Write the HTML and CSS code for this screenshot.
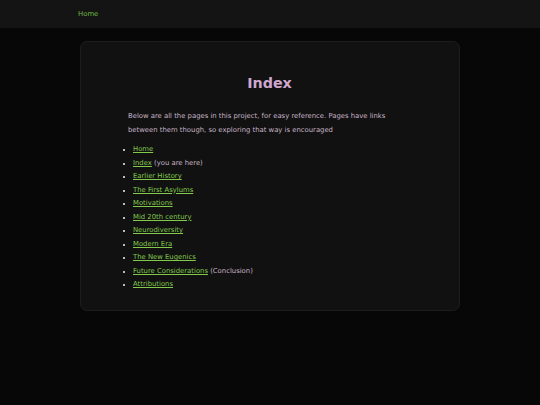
FILE: index.html
```html
<!DOCTYPE html>
<html lang="en">
<head>
<meta charset="utf-8">
<title>Index</title>
<link rel="stylesheet" href="styles.css">
</head>
<body>
<header class="topbar">
  <nav class="nav"><a class="nav-link" href="#">Home</a></nav>
</header>
<main class="page">
  <section class="card">
    <h1 class="title">Index</h1>
    <p class="intro">Below are all the pages in this project, for easy reference. Pages have links between them though, so exploring that way is encouraged</p>
    <ul class="pages">
      <li><a href="#">Home</a></li>
      <li><a href="#">Index</a> (you are here)</li>
      <li><a href="#">Earlier History</a></li>
      <li><a href="#">The First Asylums</a></li>
      <li><a href="#">Motivations</a></li>
      <li><a href="#">Mid 20th century</a></li>
      <li><a href="#">Neurodiversity</a></li>
      <li><a href="#">Modern Era</a></li>
      <li><a href="#">The New Eugenics</a></li>
      <li><a href="#">Future Considerations</a> (Conclusion)</li>
      <li><a href="#">Attributions</a></li>
    </ul>
  </section>
</main>
</body>
</html>
```
FILE: styles.css
```css
* { box-sizing: border-box; }
html, body { margin: 0; padding: 0; }
body {
  background: #070707;
  font-family: "DejaVu Sans", Verdana, sans-serif;
  font-size: 6.85px;
  color: #c6b4c6;
  min-height: 405px;
}
.topbar {
  background: #141414;
  height: 28px;
  display: flex;
  align-items: center;
  padding-left: 78px;
}
.nav-link {
  color: #6fb83f;
  text-decoration: none;
  font-size: 6.9px;
}
.page {
  display: flex;
  justify-content: center;
  padding-top: 13px;
}
.card {
  width: 380px;
  height: 270px;
  background: #111111;
  border: 1px solid #1d1d1d;
  border-radius: 7px;
  padding: 30px 48px 0 47px;
}
.title {
  margin: 0;
  text-align: center;
  font-size: 14.3px;
  font-weight: bold;
  color: #cfa8cf;
  line-height: 22px;
}
.intro {
  margin: 15px 0 0;
  line-height: 14px;
}
.pages {
  margin: 6px 0 0;
  padding-left: 5px;
  list-style: square;
}
.pages li {
  line-height: 13.5px;
}
.pages li::marker { color: #c6b4c6; font-size: 5px; }
.pages a {
  color: #82c84c;
}
```
